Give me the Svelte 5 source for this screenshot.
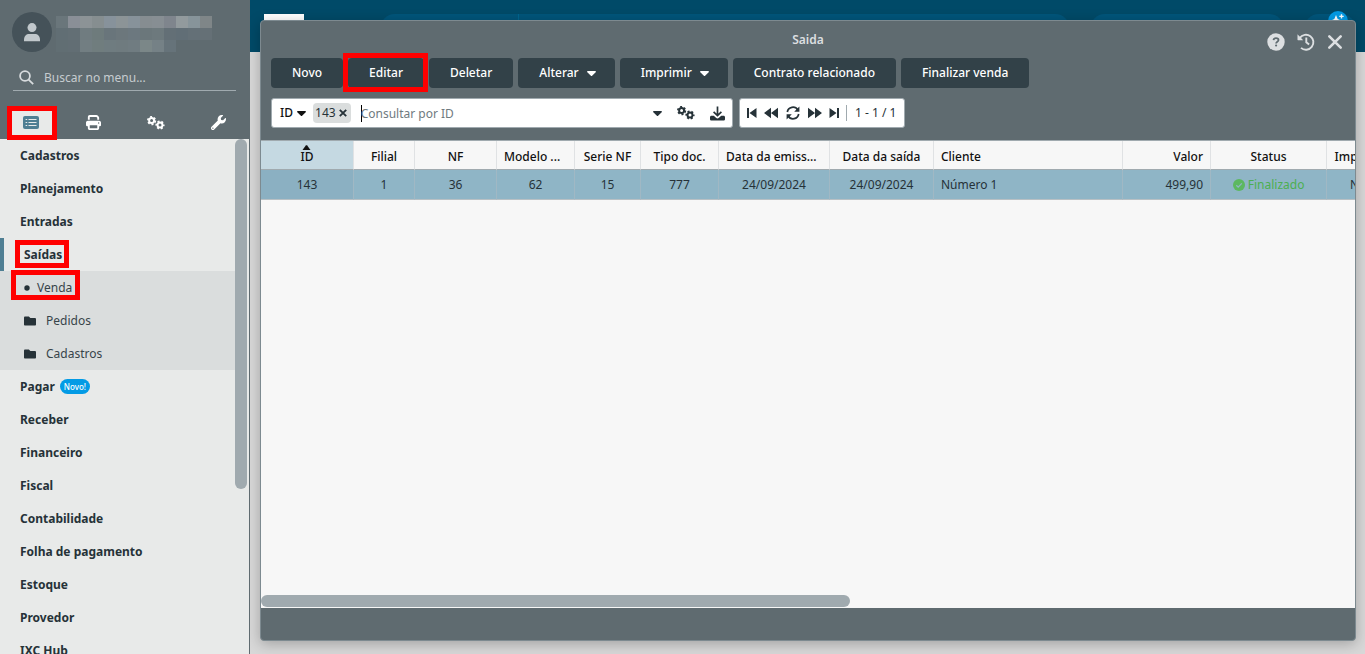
<script>
    let search = "";
    let query = "";
    let activeTab = "menu";
    let open = "Saídas";

    const blurred = [
        ["#6a767b", "#8a8f97", "#8c9396", "#868e90", "#87929b", "#8c9497", "#87929a", "#868d91", "#878e93", "#7f858d", "#929a9d", "#87949a", "#7f8688"],
        ["#616e74", "#636f75", "#707c80", "#6e7b7c", "#69757b", "#6c777c", "#6c787f", "#6b777b", "#6d797d", "#636f76", "#616e76", "#647077", "#657076"],
        ["#616e73", "#626e74", "#727e82", "#707d7e", "#6f7c80", "#6f7b7f", "#707c81", "#7b8788", "#758186", "#66737a"]
    ];

    const menu = [
        {label: "Cadastros"},
        {label: "Planejamento"},
        {label: "Entradas"},
        {label: "Saídas", children: [
            {label: "Venda", leaf: true},
            {label: "Pedidos"},
            {label: "Cadastros"}
        ]},
        {label: "Pagar", isNew: true},
        {label: "Receber"},
        {label: "Financeiro"},
        {label: "Fiscal"},
        {label: "Contabilidade"},
        {label: "Folha de pagamento"},
        {label: "Estoque"},
        {label: "Provedor"},
        {label: "IXC Hub"}
    ];

    const tabs = [
        {id: "menu", label: "Menu"},
        {id: "print", label: "Relatórios"},
        {id: "gears", label: "Configurações"},
        {id: "wrench", label: "Ferramentas"}
    ];

    const actions = [
        {label: "Novo"},
        {label: "Editar", marked: true},
        {label: "Deletar"},
        {label: "Alterar", caret: true},
        {label: "Imprimir", caret: true},
        {label: "Contrato relacionado"},
        {label: "Finalizar venda"}
    ];

    const columns = [
        {key: "id", label: "ID", width: 93},
        {key: "filial", label: "Filial", width: 61},
        {key: "nf", label: "NF", width: 82},
        {key: "modelo", label: "Modelo ...", width: 78, cut: true},
        {key: "serie", label: "Serie NF", width: 66},
        {key: "tipo", label: "Tipo doc.", width: 78},
        {key: "emissao", label: "Data da emiss...", width: 111, cut: true},
        {key: "saida", label: "Data da saída", width: 104},
        {key: "cliente", label: "Cliente", width: 189, align: "left"},
        {key: "valor", label: "Valor", width: 88, align: "right"},
        {key: "status", label: "Status", width: 116},
        {key: "impresso", label: "Impresso", width: 70}
    ];

    const rows = [
        {
            id: "143", filial: "1", nf: "36", modelo: "62", serie: "15", tipo: "777",
            emissao: "24/09/2024", saida: "24/09/2024", cliente: "Número 1",
            valor: "499,90", status: "Finalizado", impresso: "Não"
        }
    ];

    const pager = [
        {label: "Primeira página", icon: "first"},
        {label: "Página anterior", icon: "prev"},
        {label: "Atualizar", icon: "refresh"},
        {label: "Próxima página", icon: "next"},
        {label: "Última página", icon: "last"}
    ];
</script>

{#snippet caret()}
    <svg width="9" height="5" viewBox="0 0 9 5" aria-hidden="true"><path fill="currentColor" d="M.8 0h7.4c.7 0 1 .7.5 1.2L5.1 4.8c-.4.3-.8.3-1.2 0L.3 1.2C-.2.7.1 0 .8 0z"/></svg>
{/snippet}

{#snippet gears()}
    <svg width="18" height="16" viewBox="0 0 18 16" fill="none" stroke="currentColor" aria-hidden="true">
        <circle cx="4.6" cy="5.6" r="2.5" stroke-width="2"/>
        <circle cx="4.6" cy="5.6" r="3.8" stroke-width="1.6" stroke-dasharray="2 1.98"/>
        <circle cx="13" cy="10" r="2.5" stroke-width="2"/>
        <circle cx="13" cy="10" r="3.8" stroke-width="1.6" stroke-dasharray="2 1.98" stroke-dashoffset="1"/>
    </svg>
{/snippet}

<div class="app">
    <aside>
        <header class="profile">
            <div class="user">
                <div class="avatar">
                    <svg width="16" height="19" viewBox="0 0 16 19" fill="#c1c8cc" aria-hidden="true"><circle cx="8" cy="4.6" r="4.5"/><path d="M0 18.2v-1.4C0 13 2.4 11 5.2 11h5.6c2.8 0 5.2 2 5.2 5.8v1.4z"/></svg>
                </div>
                <div class="blurred">
                    {#each blurred as line}
                        <div>
                            {#each line as color}
                                <i style="background: {color}"></i>
                            {/each}
                        </div>
                    {/each}
                </div>
            </div>
            <label class="search">
                <svg width="15" height="15" viewBox="0 0 15 15" fill="none" stroke="#d8dcde" stroke-width="1.8" aria-hidden="true"><circle cx="6" cy="6" r="4.9"/><path d="M9.6 9.6l4.6 4.5"/></svg>
                <input type="text" placeholder="Buscar no menu..." aria-label="Buscar no menu" bind:value={search}>
            </label>
            <div class="tabs">
                {#each tabs as tab}
                    <button class:active={activeTab === tab.id} aria-label={tab.label} on:click={() => activeTab = tab.id}>
                        {#if tab.id === "menu"}
                            <svg width="16" height="13" viewBox="0 0 16 13" aria-hidden="true"><rect width="16" height="13" rx="2" fill="currentColor"/><path stroke="#e8eae9" stroke-width="1.2" d="M2.6 3.5h1.6M2.6 6.5h1.6M2.6 9.5h1.6M5.5 3.5h8M5.5 6.5h8M5.5 9.5h8"/></svg>
                            <span class="mark mark-tab"></span>
                        {:else if tab.id === "print"}
                            <svg width="15" height="15" viewBox="0 0 512 512" fill="currentColor" aria-hidden="true"><path d="M128 0C92.700 0 64 28.700 64 64v96h64V64h226.700L384 93.300V160h64V93.300c0-17-6.700-33.300-18.700-45.300L400 18.700C388 6.700 371.700 0 354.700 0H128zM384 352v96H128v-96h256zm64 32h32c17.700 0 32-14.300 32-32v-96c0-35.300-28.700-64-64-64H64c-35.300 0-64 28.700-64 64v96c0 17.700 14.300 32 32 32h32v64c0 35.300 28.700 64 64 64h256c35.300 0 64-28.700 64-64v-64zM432 248a24 24 0 1 1 0 48 24 24 0 1 1 0-48z"/></svg>
                        {:else if tab.id === "gears"}
                            {@render gears()}
                        {:else}
                            <svg width="15" height="15" viewBox="0 0 512 512" fill="currentColor" aria-hidden="true"><path d="M507.7 109.1c-2.2-9-13.5-12.1-20.1-5.5l-74.4 74.4-67.9-11.3L334 98.7l74.4-74.4c6.6-6.6 3.4-17.9-5.7-20.2-47.4-11.7-99.6.9-136.6 37.9-39.6 39.7-50.5 97.1-34 147.2L18.7 402.8c-25 25-25 65.5 0 90.5s65.5 25 90.5 0l213.2-213.2c50.1 16.7 107.5 5.7 147.4-34.2 37.1-37.1 49.7-89.3 37.9-136.8zM64 472c-13.3 0-24-10.8-24-24s10.8-24 24-24 24 10.7 24 24-10.7 24-24 24z"/></svg>
                        {/if}
                    </button>
                {/each}
            </div>
        </header>
        <div class="menu">
            <nav>
                {#each menu as item}
                    <a href="#menu" class="item" class:open={open === item.label} on:click|preventDefault={() => open = item.label}>
                        <span class="label">
                            {item.label}
                            {#if item.children}<span class="mark mark-item"></span>{/if}
                        </span>
                        {#if item.isNew}<span class="badge">Novo!</span>{/if}
                    </a>
                    {#if item.children && open === item.label}
                        <div class="submenu">
                            {#each item.children as child}
                                <a href="#menu" class:leaf={child.leaf}>
                                    {#if child.leaf}
                                        <svg width="6" height="6" viewBox="0 0 6 6" fill="currentColor" aria-hidden="true"><circle cx="3" cy="3" r="2.7"/></svg>
                                    {:else}
                                        <svg width="12" height="12" viewBox="0 0 512 512" fill="currentColor" aria-hidden="true"><path d="M464 128H272l-64-64H48C21.5 64 0 85.5 0 112v288c0 26.5 21.5 48 48 48h416c26.5 0 48-21.5 48-48V176c0-26.5-21.5-48-48-48z"/></svg>
                                    {/if}
                                    <span>{child.label}</span>
                                    {#if child.leaf}<span class="mark mark-leaf"></span>{/if}
                                </a>
                            {/each}
                        </div>
                    {/if}
                {/each}
            </nav>
            <div class="scroll-y"></div>
        </div>
    </aside>

    <main>
        <div class="topbar">
            <div class="logo"></div>
            <div class="pill wide"><span></span></div>
            <div class="pill medium"></div>
            <div class="pill round">
                <svg width="20" height="20" viewBox="0 0 20 20" aria-hidden="true"><circle cx="10" cy="10" r="10" fill="#039be5"/><path fill="#fff" d="M8 4l1.7 4 4 1.7-4 1.7L8 15.5l-1.7-4.1-4-1.7 4-1.7z"/><path stroke="#fff" stroke-width="1.4" d="M13.5 3.2v4.4M11.3 5.4h4.4"/></svg>
            </div>
        </div>

        <section class="window">
            <div class="titlebar">
                <h1>Saida</h1>
                <div class="window-buttons">
                    <button aria-label="Ajuda">
                        <svg width="18" height="18" viewBox="0 0 18 18" fill="none" aria-hidden="true"><circle cx="9" cy="9" r="8.7" fill="currentColor"/><path stroke="#5f6b70" stroke-width="1.8" d="M6.5 7.2c.2-1.3 1.1-2 2.5-2 1.5 0 2.500.7 2.500 1.900 0 1.700-2.400 1.600-2.400 3.300"/><circle cx="9.1" cy="12.5" r="1.1" fill="#5f6b70"/></svg>
                    </button>
                    <button aria-label="Histórico">
                        <svg width="18" height="18" viewBox="0 0 18 18" fill="none" stroke="currentColor" stroke-width="1.9" aria-hidden="true"><path d="M2.7 5A7.5 7.5 0 1 1 4 14.9M9.3 4.5v4.8l2.8 2.3"/><path fill="currentColor" stroke="none" d="M.5 1.3v5.4c0 .3.2.5.5.5h5.2z"/></svg>
                    </button>
                    <button aria-label="Fechar">
                        <svg width="16" height="16" viewBox="0 0 16 16" fill="none" stroke="currentColor" stroke-width="2.6" stroke-linecap="round" aria-hidden="true"><path d="M2.3 2.3l11.4 11.4M13.7 2.3L2.3 13.7"/></svg>
                    </button>
                </div>
            </div>

            <div class="actions">
                {#each actions as action}
                    <button>
                        {action.label}
                        {#if action.caret}{@render caret()}{/if}
                        {#if action.marked}<span class="mark mark-action"></span>{/if}
                    </button>
                {/each}
            </div>

            <div class="filters">
                <div class="query">
                    <button class="field">ID {@render caret()}</button>
                    <span class="chip">143
                        <button aria-label="Remover filtro"><svg width="8" height="8" viewBox="0 0 8 8" stroke="currentColor" stroke-width="1.9" aria-hidden="true"><path d="M.8.8l6.4 6.4M7.2.8L.8 7.2"/></svg></button>
                    </span>
                    <span class="cursor"></span>
                    <input type="text" placeholder="Consultar por ID" aria-label="Consultar por ID" bind:value={query}>
                    <div class="tools">
                        <button aria-label="Opções">{@render caret()}</button>
                        <button aria-label="Configurar">{@render gears()}</button>
                        <button aria-label="Exportar">
                            <svg width="15" height="15" viewBox="0 0 15 15" fill="none" stroke="currentColor" aria-hidden="true"><path stroke-width="1.7" d="M7.5.5V9M3.6 5.8l3.9 3.7 3.9-3.7"/><path fill="currentColor" stroke="none" d="M1.5 9.8h2.3l2.2 2c.9.8 2.1.8 3 0l2.2-2h2.3c.8 0 1.5.6 1.5 1.4v2c0 .8-.7 1.3-1.5 1.3h-12C.7 14.500 0 14 0 13.200v-2c0-.8.7-1.400 1.500-1.400z"/></svg>
                        </button>
                    </div>
                </div>
                <div class="pager">
                    {#each pager as page}
                        <button aria-label={page.label}>
                            {#if page.icon === "first"}
                                <svg width="10" height="12" viewBox="0 0 10 12" fill="currentColor" aria-hidden="true"><path d="M0 1h2v10H0zM9.5 1v10l-7-5z"/></svg>
                            {:else if page.icon === "prev"}
                                <svg width="14" height="12" viewBox="0 0 14 12" fill="currentColor" aria-hidden="true"><path d="M7 .7v10.6L0 6zM14 .7v10.6L7 6z"/></svg>
                            {:else if page.icon === "refresh"}
                                <svg width="14" height="14" viewBox="0 0 14 14" fill="none" stroke="currentColor" stroke-width="1.7" aria-hidden="true"><path d="M1.3 6A5.7 5.7 0 0 1 11.8 4M12.7 8A5.7 5.7 0 0 1 2.2 10"/><path fill="currentColor" stroke="none" d="M13.4.6v5.2H8.2zM.6 13.4V8.2h5.2z"/></svg>
                            {:else if page.icon === "next"}
                                <svg width="14" height="12" viewBox="0 0 14 12" fill="currentColor" aria-hidden="true"><path d="M7 .7v10.6L14 6zM0 .7v10.6L7 6z"/></svg>
                            {:else}
                                <svg width="10" height="12" viewBox="0 0 10 12" fill="currentColor" aria-hidden="true"><path d="M8 1h2v10H8zM.5 1v10l7-5z"/></svg>
                            {/if}
                        </button>
                    {/each}
                    <span class="range">1 - 1 / 1</span>
                </div>
            </div>

            <div class="grid">
                <table>
                    <colgroup>
                        {#each columns as col}
                            <col style="width: {col.width}px">
                        {/each}
                    </colgroup>
                    <thead>
                    <tr>
                        {#each columns as col}
                            <th class={col.align} class:cut={col.cut} class:sorted={col.key === "id"}>
                                {col.label}
                                {#if col.key === "id"}
                                    <svg class="sort" width="9" height="5" viewBox="0 0 9 5" fill="currentColor" aria-hidden="true"><path d="M.5 5L3.8.5c.4-.5 1-.5 1.4 0L8.5 5z"/></svg>
                                {/if}
                            </th>
                        {/each}
                    </tr>
                    </thead>
                    <tbody>
                    {#each rows as row}
                        <tr>
                            {#each columns as col}
                                <td class={col.align} class:status={col.key === "status"} class:sorted={col.key === "id"}>
                                    {#if col.key === "status"}
                                        <svg width="12" height="12" viewBox="0 0 12 12" aria-hidden="true"><circle cx="6" cy="6" r="6" fill="#5cb860"/><path fill="none" stroke="#8fb5c6" stroke-width="1.3" d="M3.3 6.2l1.9 1.9 3.6-3.7"/></svg>
                                    {/if}
                                    {row[col.key]}
                                </td>
                            {/each}
                        </tr>
                    {/each}
                    </tbody>
                </table>
                <div class="scroll-x"></div>
            </div>
            <footer></footer>
        </section>
    </main>
</div>

<style>
    :global(body) {
        margin: 0;
        overflow: hidden;
    }

    .app {
        display: flex;
        height: 100vh;
        font: 12px/16px "Noto Sans", "Open Sans", sans-serif;
        color: #263238;
        background: #d8d8d8;
    }

    .app, .app * {
        box-sizing: border-box;
    }

    button {
        display: flex;
        align-items: center;
        justify-content: center;
        padding: 0;
        border: 0;
        background: none;
        color: inherit;
        font: inherit;
        cursor: pointer;
    }

    svg {
        flex: none;
    }

    input {
        flex: 1;
        min-width: 0;
        padding: 2px 0 0;
        border: 0;
        outline: 0;
        background: none;
        font: inherit;
        color: inherit;
    }

    a {
        color: inherit;
        text-decoration: none;
    }

    /* red highlights drawn over the controls */
    .mark {
        position: absolute;
        z-index: 2;
        border: 5px solid #f00;
        pointer-events: none;
    }

    aside {
        display: flex;
        flex-direction: column;
        flex: none;
        width: 250px;
        border-right: 1px solid #5f6b70;
        background: #e8eae9;
        z-index: 1;
    }

    .profile {
        display: flex;
        flex-direction: column;
        flex: none;
        height: 139px;
        padding-top: 12px;
        background: #5f6b70;
        margin-right: -1px;
    }

    .user {
        display: flex;
        gap: 4px;
        padding-left: 12px;
    }

    .avatar {
        display: flex;
        align-items: center;
        justify-content: center;
        width: 40px;
        height: 40px;
        border-radius: 50%;
        background: #455259;
    }

    .blurred {
        padding-top: 4px;
    }

    .blurred div {
        display: flex;
    }

    .blurred i {
        width: 12px;
        height: 12px;
    }

    .search {
        display: flex;
        align-items: center;
        gap: 10px;
        height: 27px;
        margin: 12px 14px 0 13px;
        padding-left: 6px;
        border-bottom: 1px solid #a0aaaf;
        color: #d8dcde;
    }

    .search input::placeholder {
        color: #c6cccf;
        opacity: 1;
    }

    .tabs {
        display: grid;
        grid-template-columns: repeat(4, 1fr);
        margin-top: 15px;
        height: 33px;
        color: #fff;
    }

    .tabs button {
        position: relative;
    }

    .tabs button.active {
        padding: 0 11px;
        background: #e8eae9;
        background-clip: content-box;
        color: #4f7f93;
    }

    .mark-tab {
        inset: 0 6px -1px 7px;
    }

    .menu {
        display: flex;
        flex: 1;
        min-height: 0;
    }

    nav {
        flex: 1;
    }

    .item {
        display: flex;
        align-items: center;
        gap: 5px;
        height: 33px;
        padding-left: 20px;
        font-weight: 700;
    }

    .item.open {
        border-left: 4px solid #4f7f93;
    }

    .label {
        position: relative;
    }

    .mark-item {
        inset: -7px -7px -5px -9px;
    }

    .badge {
        height: 15px;
        padding: 0 4px;
        border-radius: 8px;
        background: #039be5;
        color: #fff;
        font-size: 8px;
        font-weight: 500;
        line-height: 15px;
    }

    .submenu {
        background: #dadddd;
        color: #37444a;
    }

    .submenu a {
        position: relative;
        display: flex;
        align-items: center;
        gap: 10px;
        height: 33px;
        padding-left: 24px;
    }

    .submenu a.leaf {
        gap: 7px;
    }

    .submenu svg {
        color: #263238;
    }

    .mark-leaf {
        top: -1px;
        bottom: 4px;
        left: 11px;
        width: 69px;
    }

    .scroll-y {
        width: 12px;
        height: 350px;
        margin-right: 2px;
        border-radius: 6px;
        background: #a0aaaf;
    }

    main {
        position: relative;
        flex: 1;
        min-width: 0;
    }

    .topbar {
        display: flex;
        align-items: flex-start;
        height: 52px;
        padding: 14px 9px 0 14px;
        background: #004a68;
    }

    .logo {
        width: 40px;
        height: 30px;
        background: #fff;
    }

    .pill {
        height: 30px;
        border-radius: 15px;
        background: #00557a;
    }

    .wide {
        flex: 1;
        margin-left: 76px;
        padding-left: 138px;
    }

    .wide span {
        display: block;
        height: 30px;
        border-left: 1px solid #00658e;
    }

    .medium {
        width: 194px;
        margin-left: 20px;
    }

    .round {
        width: 52px;
        margin-left: 20px;
    }

    .round svg {
        display: block;
        margin: -3px 0 0 24px;
    }

    .window {
        position: absolute;
        inset: 20px 9px 13px 10px;
        display: flex;
        flex-direction: column;
        border: 1px solid #7d8a90;
        border-radius: 4px;
        background: #5f6b70;
        box-shadow: 0 3px 14px rgba(0, 0, 0, .25);
        overflow: hidden;
    }

    .titlebar {
        display: grid;
        grid-template-columns: 1fr auto 1fr;
        height: 37px;
        color: #dcdfe1;
    }

    h1 {
        grid-column: 2;
        margin: 11px 0 0;
        font-size: 12px;
        line-height: 16px;
        font-weight: 600;
    }

    .window-buttons {
        display: flex;
        justify-content: flex-end;
        gap: 12px;
        padding: 5px 12px 0 0;
    }

    .actions {
        display: flex;
        gap: 5px;
        padding: 0 10px;
    }

    .actions button {
        position: relative;
        gap: 8px;
        height: 30px;
        padding: 0 21px;
        border-radius: 4px;
        background: #324148;
        color: #fff;
        font-weight: 500;
        white-space: nowrap;
    }

    .actions button:has(svg) {
        padding-right: 19px;
    }

    .mark-action {
        inset: -5px -4px -4px -5px;
    }

    .filters {
        display: flex;
        gap: 6px;
        padding: 10px 10px 12px;
    }

    .query, .pager {
        display: flex;
        align-items: center;
        height: 30px;
        border: 1px solid #a0aaaf;
        border-radius: 3px;
        background: #fff;
    }

    .query {
        width: 462px;
        padding: 0 7px 0 8px;
    }

    .tools {
        display: flex;
        align-items: center;
        gap: 15px;
    }

    .field {
        gap: 4px;
        font-weight: 500;
        color: #111;
    }

    .chip {
        display: flex;
        align-items: center;
        gap: 3px;
        height: 20px;
        margin: 0 10px 0 7px;
        padding: 0 4px 0 2px;
        border-radius: 4px;
        background: #dadddd;
    }

    .cursor {
        width: 1px;
        height: 17px;
        margin-right: -1px;
        background: #000;
    }

    .query input::placeholder {
        color: #6f7a80;
        opacity: 1;
    }

    .pager {
        gap: 7px;
        padding: 0 8px 0 7px;
    }

    .pager button:nth-child(3) {
        margin: 0 1px;
    }

    .range {
        padding-left: 8px;
        border-left: 1px solid #a0aaaf;
    }

    .grid {
        display: flex;
        flex-direction: column;
        flex: 1;
        min-height: 0;
        overflow: hidden;
        background: #f7f7f7;
        border-top: 1px solid #a0aaaf;
    }

    table {
        width: 1136px;
        flex: none;
        table-layout: fixed;
        border-collapse: separate;
        border-spacing: 0;
    }

    th, td {
        padding: 0 7px;
        border-right: 1px solid #e0e2e4;
        text-align: center;
        white-space: nowrap;
        overflow: hidden;
    }

    th {
        position: relative;
        height: 29px;
        padding-top: 4px;
        border-bottom: 1px solid #a0aaaf;
        font-weight: 500;
        color: #111;
    }

    th.sorted {
        background: #c5d9e2;
    }

    td {
        height: 30px;
        border-right-color: #a0b8c4;
        border-bottom: 1px solid #b8c0c4;
        background: #8fb5c6;
    }

    td.sorted {
        background: #8bb0c2;
    }

    .left, .cut {
        text-align: left;
    }

    .right {
        text-align: right;
    }

    .sort {
        position: absolute;
        top: 4px;
        left: 41px;
    }

    .status {
        color: #4caf50;
    }

    .status svg {
        vertical-align: -2px;
    }

    .scroll-x {
        width: 589px;
        height: 12px;
        margin: auto 0 1px;
        border-radius: 6px;
        background: #a0aaaf;
    }

    footer {
        flex: none;
        height: 32px;
    }
</style>
